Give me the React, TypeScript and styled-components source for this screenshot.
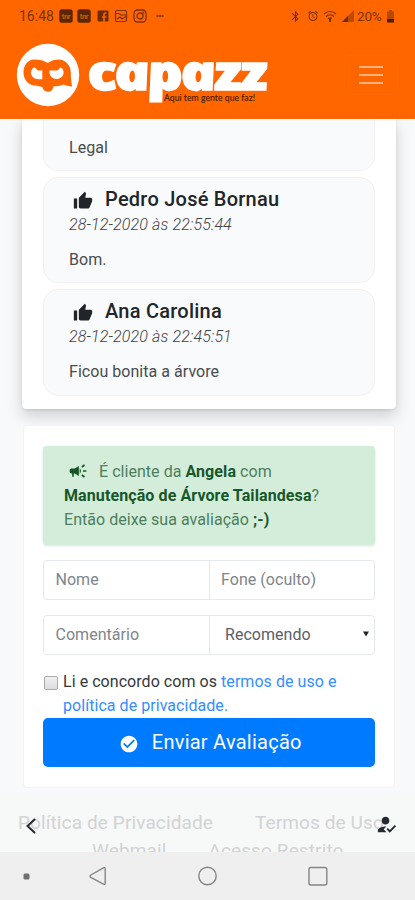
import React from "react";
import styled, { createGlobalStyle } from "styled-components";
import {
  MdAccessAlarm, MdBluetooth, MdCampaign, MdCheckCircle, MdHowToReg, MdThumbUp,
} from "react-icons/md";

const GlobalStyle = createGlobalStyle`
  * { box-sizing: border-box; }
  body { margin: 0; background: #f8f9fa; font-family: Roboto, "Liberation Sans", sans-serif; }
`;

const Screen = styled.div`
  width: 415px; height: 900px; overflow: hidden;
  display: flex; flex-direction: column;
  background: #f8f9fb; color: #212529;
  font-size: 16px; line-height: 24px; letter-spacing: 0.04px;
`;
const Header = styled.header`
  flex: none; height: 118.5px; background: #ff6600;
  position: relative; z-index: 2;
`;
const StatusBar = styled.div`
  height: 32px; padding: 0 20px 0 19px;
  display: flex; justify-content: space-between; align-items: center;
  font-size: 14px; color: #7b3200;
`;
const StatusGroup = styled.div<{ $gap: number }>`
  display: flex; align-items: center; gap: ${p => p.$gap}px;
  svg { display: block; flex: none; }
`;
const Clock = styled.span`letter-spacing: 0; margin-right: 0.5px;`;
const Percent = styled.span`font-size: 13.5px; letter-spacing: -0.2px; margin: 0 0 0 -1px;`;
const NavBar = styled.nav`
  height: 86px; padding: 0 17px 0 16px;
  display: flex; align-items: center; justify-content: space-between;
`;
const LogoImage = styled.svg`display: block; overflow: visible;`;
const Wordmark = styled.text`
  font-family: "Open Sans", "Noto Sans", sans-serif;
  font-size: 49px; font-style: italic; font-weight: 800; letter-spacing: -2.5px;
  fill: #fff; stroke: #fff; stroke-width: 1.4px;
`;
const Tagline = styled.text`font: 400 8.5px Lato, sans-serif; fill: #3f1900; stroke: #3f1900; stroke-width: .1px;`;
const Toggler = styled.button`
  width: 54px; height: 40px; padding: 0;
  border: 1px solid rgba(255,255,255,.02); border-radius: 4px; background: transparent;
  display: flex; flex-direction: column; align-items: center; justify-content: center; gap: 5.7px;
`;
const TogglerBar = styled.span`width: 24px; height: 2.3px; background: #ffb07c;`;
const Page = styled.main`
  flex: none; height: 674px; padding: 0 20px 0 21.5px;
`;
const ReviewsPanel = styled.section`
  height: 290px; padding: 0 20.5px 0 21.5px; margin-right: -0.5px;
  background: #fff; border-radius: 0 0 4px 4px;
  box-shadow: 0 7px 16px rgba(0,0,0,.17), 0 1px 3px rgba(0,0,0,.1);
`;
const Review = styled.article<{ $height: number; $first?: boolean }>`
  height: ${p => p.$height}px; padding: ${p => (p.$first ? 17.5 : 9)}px 25px 0;
  margin-bottom: 6px; border: 1px solid #f0f1f3; background: #f9fafb;
  border-radius: ${p => (p.$first ? "0 0 15px 15px" : "15px")};
  border-top-width: ${p => (p.$first ? 0 : 1)}px;
`;
const ReviewName = styled.h3`
  margin: 0; height: 24px; display: flex; align-items: center;
  font-size: 20px; font-weight: 500; line-height: 24px; letter-spacing: 0.24px;
  svg { margin: 3px 12px 0 4px; }
`;
const ReviewDate = styled.time`
  display: block; height: 27px; line-height: 28px; font-style: italic; color: #3f4347;
  font-weight: 300; letter-spacing: 0.13px;
`;
const ReviewText = styled.p<{ $top?: number }>`margin: ${p => p.$top ?? 10}px 0 0; line-height: 24px; color: #484c50;`;

const FormPanel = styled.form`
  height: 363px; margin: 16px 0 0 1px; padding: 20.5px 19px 0 19.5px;
  background: #fff; border: 1px solid #f2f3f4; border-radius: 4px;
`;
const Notice = styled.div`
  height: 99px; padding: 14px 21px 12px; border-radius: 4px;
  background: #d4edda; color: #4d7e5b; box-shadow: 0 1px 3px rgba(0,0,0,.12);
  line-height: 24px; white-space: nowrap; letter-spacing: 0.04px;
  b { font-weight: 700; color: #16572a; letter-spacing: 0.1px; }
  svg { vertical-align: -4px; color: #155724; margin: 0 7px 0 4px; }
`;
const FieldRow = styled.div<{ $top: number }>`
  margin-top: ${p => p.$top}px; height: 40px; display: grid; grid-template-columns: 164.5px 1fr;
  border: 1px solid #e5e8eb; border-radius: 4px;
`;
const Field = styled.div<{ $split?: boolean; $select?: boolean }>`
  display: flex; align-items: center; justify-content: space-between;
  padding: 0 4px 0 ${p => (p.$select ? 15.5 : 11.5)}px;
  border-left: ${p => (p.$split ? "1px solid #e5e8eb" : "0")};
  color: ${p => (p.$select ? "#5a6067" : "#7e858c")};
`;
const Consent = styled.label`
  margin-top: 14.5px; height: 48px; padding-left: 1px; display: flex; gap: 5px; color: #33383d;
`;
const CheckSquare = styled.span`
  flex: none; width: 14px; height: 14px; margin-top: 6.5px;
  border: 1px solid #a9a9a9; border-radius: 2px; background: linear-gradient(#f1f1f1, #dcdcdc);
`;
const ConsentText = styled.span`white-space: nowrap; letter-spacing: 0.05px;`;
const Link = styled.a`color: #358dff;`;
const Submit = styled.button`
  width: 100%; height: 49px; display: flex; align-items: center; justify-content: center; gap: 12.5px;
  border: 0; border-radius: 5px; padding: 0 0 1px 3px; background: #007bff; color: #fff;
  font: 400 20px/30px Roboto, sans-serif; letter-spacing: 0.25px;
  svg { margin-top: 4px; }
`;
const Footer = styled.footer`
  flex: none; height: 59.5px; background: #f7f8f8; position: relative; overflow: hidden;
  color: #d2d3d4; font-size: 19px; line-height: 28px; letter-spacing: 0.12px; white-space: nowrap;
`;
const FooterRow = styled.div<{ $left: number; $gap: number; $top: number }>`
  padding-left: ${p => p.$left}px; margin-top: ${p => p.$top}px;
  display: flex; gap: ${p => p.$gap}px; height: 28px;
`;
const Floating = styled.div<{ $x: number; $y: number }>`
  position: absolute; left: ${p => p.$x}px; top: ${p => p.$y}px; color: #252a30;
  svg { display: block; }
`;
const SystemNav = styled.div`
  flex: none; height: 48px; background: #efefef; display: flex; align-items: center;
  svg { display: block; }
`;

const AppSquare = ({ label }: { label: string }) => (
  <svg width="14" height="14" viewBox="0 0 14 14">
    <rect x=".3" y=".3" width="13.4" height="13.4" rx="2.5" fill="#5e2600" />
    <text x="7" y="9.6" textAnchor="middle" fontSize="7.5" fontWeight="700" fontFamily="Roboto" fill="#d25800" letterSpacing="-.3">{label}</text>
  </svg>
);

const Logo = () => (
  <LogoImage width="256" height="70" viewBox="16 40 256 70">
    <circle cx="48" cy="75" r="31.2" fill="#fff" />
    <path d="M34 59.5C40 59.5 44 60.5 47.7 63C51.5 60.5 55 59.5 59.5 59.5C66.5 60.5 70.8 66 70.8 72.5C70.8 78 71.2 82 72.2 86.5C68.5 86.3 66 85.5 63.5 84.5C60 86 56 86 53.5 86.5C52.8 90 50.8 91.7 48 91.7C45 91.7 43 90 42.5 87.3C41 86.5 39 86.3 37 85.8C29 86 23.5 80 23.5 72.5C23.5 65 28 59.5 34 59.5Z" fill="#ff6600" />
    <path d="M34.5 67.2L38 70.5H47.5V70.5H42.3V79.3H38.5C34 79.3 31 76.3 31 72.8C31 70 32.5 67.7 34.5 67.2Z" fill="#fff" />
    <path d="M49.5 70.5H57.5L60.5 67.3C62.7 68.5 63.8 70.5 63.6 73C63.2 76.5 60 79 56.5 79C52.5 79 49.5 76 49.5 72Z" fill="#fff" />
    <Wordmark transform="translate(90 89.5) skewX(12)" textLength="178" lengthAdjust="spacingAndGlyphs">capazz</Wordmark>
    <Tagline x="164" y="101" textLength="91" lengthAdjust="spacingAndGlyphs">Aqui tem gente que faz!</Tagline>
  </LogoImage>
);

export default function App() {
  return (
    <Screen>
      <GlobalStyle />
      <Header>
        <StatusBar>
          <StatusGroup $gap={4.5}>
            <Clock>16:48</Clock>
            <AppSquare label="tnr" />
            <AppSquare label="tnr" />
            <svg width="14" height="14" viewBox="0 0 14 14"><rect x="1.5" y="1.5" width="11" height="11" rx="1" fill="#6b2c00" /><path d="M8 13V5.5Q8 3.8 10.5 4M6 8H10.5" stroke="#f46200" strokeWidth="1.7" fill="none" /></svg>
            <svg width="14" height="14" viewBox="0 0 14 14" fill="none" stroke="#7b3200" strokeWidth="1.2"><rect x="1.5" y="1.5" width="11" height="11" rx="1.5" /><path d="M2 4.5H5L7 6H12M3 10L6 8L8 10L12 7.5" /></svg>
            <svg width="14" height="14" viewBox="0 0 14 14" fill="none" stroke="#7b3200" strokeWidth="1.3"><rect x="1" y="1" width="12" height="12" rx="3.5" /><circle cx="7" cy="7" r="3" /><circle cx="10.5" cy="3.5" r=".3" /></svg>
            <svg width="17" height="14" viewBox="0 0 17 14"><path d="M5.500 7H12.500" stroke="#8d3900" strokeWidth="2" strokeDasharray="2 .5" /></svg>
          </StatusGroup>
          <StatusGroup $gap={4.5}>
            <MdBluetooth size={13} />
            <MdAccessAlarm size={12} />
            <svg width="14" height="14" viewBox="0 0 14 14" fill="none" stroke="#7b3200" strokeWidth="1.2"><path d="M1 5Q7 0 13 5M3 7.5Q7 4 11 7.5M5 9.5Q7 8 9 9.5" /><path d="M7 9V13" strokeWidth="2" /></svg>
            <svg width="12" height="12" viewBox="0 0 12 12"><path d="M0 12L12 0V12Z" fill="#ba4b00" /><path d="M0 12L6 6V12Z" fill="#6d2c00" /></svg>
            <Percent>20%</Percent>
            <svg width="9" height="13" viewBox="0 0 9 13"><path d="M3 0H6V1.5H8V9H1V1.5H3Z" fill="#b54900" /><path d="M1 9H8V12.5H1Z" fill="#4b1e00" /></svg>
          </StatusGroup>
        </StatusBar>
        <NavBar>
          <Logo />
          <Toggler aria-label="Menu"><TogglerBar /><TogglerBar /><TogglerBar /></Toggler>
        </NavBar>
      </Header>

      <Page>
        <ReviewsPanel>
          <Review $height={52.5} $first><ReviewText $top={0}>Legal</ReviewText></Review>
          <Review $height={106}>
            <ReviewName><MdThumbUp size={20} />Pedro José Bornau</ReviewName>
            <ReviewDate>28-12-2020 às 22:55:44</ReviewDate>
            <ReviewText>Bom.</ReviewText>
          </Review>
          <Review $height={106.5}>
            <ReviewName><MdThumbUp size={20} />Ana Carolina</ReviewName>
            <ReviewDate>28-12-2020 às 22:45:51</ReviewDate>
            <ReviewText>Ficou bonita a árvore</ReviewText>
          </Review>
        </ReviewsPanel>

        <FormPanel>
          <Notice>
            <MdCampaign size={20} /> É cliente da <b>Angela</b> com<br />
            <b>Manutenção de Árvore Tailandesa</b>?<br />
            Então deixe sua avaliação <b>;-)</b>
          </Notice>
          <FieldRow $top={15}>
            <Field>Nome</Field>
            <Field $split>Fone (oculto)</Field>
          </FieldRow>
          <FieldRow $top={15}>
            <Field>Comentário</Field>
            <Field $split $select>Recomendo
              <svg width="8" height="8" viewBox="0 0 8 8"><path d="M1 .5H7L4 5.500Z" fill="#222" /></svg>
            </Field>
          </FieldRow>
          <Consent>
            <CheckSquare role="checkbox" aria-checked="false" />
            <ConsentText>Li e concordo com os <Link>termos de uso e<br />política de privacidade.</Link></ConsentText>
          </Consent>
          <Submit type="button"><MdCheckCircle size={20} />Enviar Avaliação</Submit>
        </FormPanel>
      </Page>

      <Footer>
        <FooterRow $left={18} $gap={42} $top={16}><span>Política de Privacidade</span><span>Termos de Uso</span></FooterRow>
        <FooterRow $left={92} $gap={42} $top={0}><span>Webmail</span><span>Acesso Restrito</span></FooterRow>
        <Floating $x={24} $y={24}>
          <svg width="14" height="18" viewBox="0 0 14 18"><path d="M11 2L3.5 9L11 16" fill="none" stroke="currentColor" strokeWidth="2" /></svg>
        </Floating>
        <Floating $x={375} $y={20}><MdHowToReg size={23} /></Floating>
      </Footer>

      <SystemNav>
        <svg width="415" height="48" viewBox="0 852 415 48" fill="none" stroke="#858585" strokeWidth="1.4">
          <rect x="23.5" y="873.5" width="6" height="6" rx="1.5" fill="#707070" stroke="none" />
          <path d="M90.8 875L103.5 867.8Q105.2 867 105.2 869V883Q105.2 885 103.5 884.2L90.8 877.3Q89.2 876.2 90.8 875Z" />
          <circle cx="207.5" cy="876" r="8.7" />
          <rect x="309" y="867.5" width="17.8" height="17.5" rx="2" />
        </svg>
      </SystemNav>
    </Screen>
  );
}
